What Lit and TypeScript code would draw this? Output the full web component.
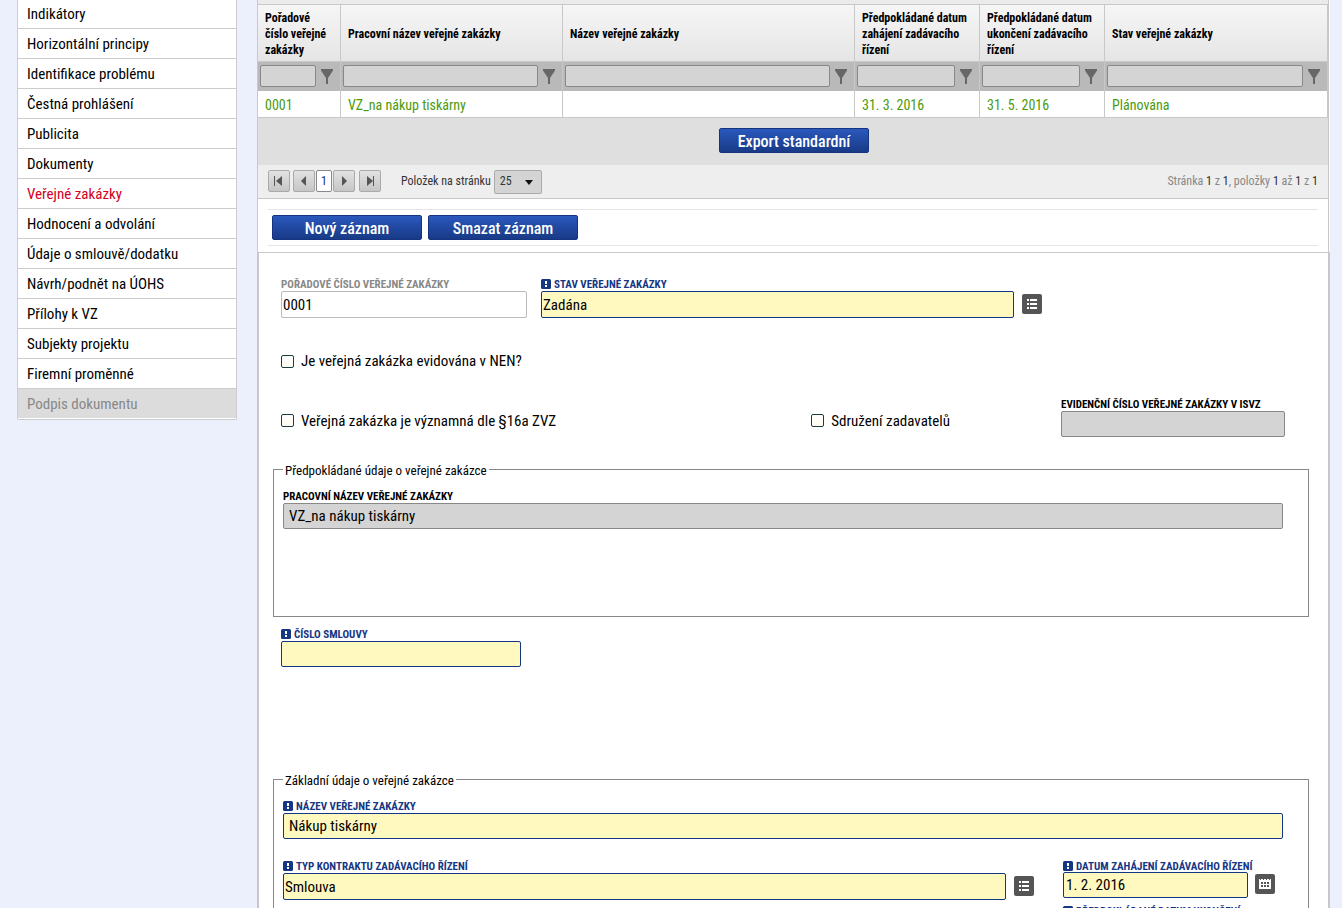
import { LitElement, html, css, svg, nothing } from "lit";
import { customElement } from "lit/decorators.js";
import { classMap } from "lit/directives/class-map.js";

interface Column {
  title: string;
  value: string;
  width: number;
}

const MENU = [
  "Indikátory",
  "Horizontální principy",
  "Identifikace problému",
  "Čestná prohlášení",
  "Publicita",
  "Dokumenty",
  "Veřejné zakázky",
  "Hodnocení a odvolání",
  "Údaje o smlouvě/dodatku",
  "Návrh/podnět na ÚOHS",
  "Přílohy k VZ",
  "Subjekty projektu",
  "Firemní proměnné",
  "Podpis dokumentu",
];

const COLUMNS: Column[] = [
  { title: "Pořadové číslo veřejné zakázky", value: "0001", width: 83 },
  { title: "Pracovní název veřejné zakázky", value: "VZ_na nákup tiskárny", width: 222 },
  { title: "Název veřejné zakázky", value: "", width: 292 },
  { title: "Předpokládané datum zahájení zadávacího řízení", value: "31. 3. 2016", width: 125 },
  { title: "Předpokládané datum ukončení zadávacího řízení", value: "31. 5. 2016", width: 125 },
  { title: "Stav veřejné zakázky", value: "Plánována", width: 223 },
];

const TOTAL = COLUMNS.reduce((sum, c) => sum + c.width, 0);

const funnel = html`<svg width="12" height="15" viewBox="0 0 12 15" aria-hidden="true">
  <path d="M0 0h12v1.5L7 9v6H5V9L0 1.5z" fill="#666" />
</svg>`;

const required = html`<svg class="mark" width="10" height="10" viewBox="0 0 10 10" aria-hidden="true">
  <rect width="10" height="10" rx="1.5" fill="#153683" />
  <path d="M4 2h2v3H4zM4 6h2v2H4z" fill="#fff" />
</svg>`;

const listIcon = html`<svg width="20" height="20" viewBox="0 0 20 20" aria-hidden="true">
  <path d="M5 5h2v2H5zM8 5h7v2H8zM5 9h2v2H5zM8 9h7v2H8zM5 13h2v2H5zM8 13h7v2H8z" fill="#fff" />
</svg>`;

const calendarIcon = html`<svg width="20" height="20" viewBox="0 0 20 20" aria-hidden="true">
  <path d="M4 5h1V4h1v1h2V4h1v1h2V4h1v1h2V4h1v1h1v10H4z" fill="#fff" />
  <path
    d="M5 4h1v2H5zM8 4h1v2H8zM11 4h1v2h-1zM14 4h1v2h-1zM6 8h2v2H6zM9 8h2v2H9zM12 8h2v2h-2zM6 11h2v2H6zM9 11h2v2H9zM12 11h2v2h-2z"
    fill="#555"
  />
</svg>`;

const arrow = (kind: "first" | "prev" | "next" | "last") => {
  const shapes = {
    first: svg`<path d="M6 6h1v10H6z" /><path d="M14 6v10L8 11z" />`,
    prev: svg`<path d="M13 6v10L8 11z" />`,
    next: svg`<path d="M9 6v10l5-5z" />`,
    last: svg`<path d="M8 6v10l6-5z" /><path d="M14 6h1v10h-1z" />`,
  };
  return html`<svg width="20" height="20" viewBox="1 1 20 20" fill="#555" aria-hidden="true">${shapes[kind]}</svg>`;
};

@customElement("app-root")
export class AppRoot extends LitElement {
  static styles = css`
    :host {
      display: flex;
      align-items: flex-start;
      gap: 20px;
      box-sizing: border-box;
      height: 100vh;
      overflow: hidden;
      padding: 0 12px 0 17px;
      background: #ecf0fd;
      color: #000;
      font-family: "Roboto Condensed", "Liberation Sans Narrow", Roboto, sans-serif;
      font-size: 15px;
    }
    * {
      box-sizing: border-box;
    }
    input,
    button,
    select {
      font-family: inherit;
      margin: 0;
    }
    .menu {
      flex: 0 0 220px;
      border: 1px solid #ccc;
      border-top: 0;
      border-radius: 0 0 2px 2px;
      background: #fff;
      padding-bottom: 1px;
    }
    .menu a {
      display: block;
      height: 30px;
      padding-left: 9px;
      border-bottom: 1px solid #ccc;
      line-height: 31px;
      color: #000;
      text-decoration: none;
    }
    .menu a:first-child {
      height: 29px;
      line-height: 29px;
    }
    .menu a.active {
      color: #d3001b;
    }
    .menu a.disabled {
      height: 29px;
      border-bottom: 0;
      background: #dcdcdc;
      color: #888;
    }
    main {
      flex: 1;
      min-width: 0;
      background: #fff;
    }
    .grid {
      margin-right: 1px;
      padding-top: 4px;
      border: solid #c8c8c8;
      border-width: 0 1px 1px;
      background: #ebebeb;
    }
    table {
      width: 100%;
      table-layout: fixed;
      border-collapse: separate;
      border-spacing: 0;
      border-top: 1px solid #c8c8c8;
    }
    th,
    td {
      border: solid #c8c8c8;
      border-width: 0 1px 1px 0;
      text-align: left;
    }
    .titles th {
      height: 57px;
      padding: 2px 6px 0 7px;
      background: linear-gradient(#f6f6f6, #e5e5e5);
      font-size: 12px;
      font-weight: 700;
      line-height: 16px;
    }
    .filters td {
      height: 29px;
      padding: 0 7px 1px 2px;
      border-bottom: 0;
      background: #b9b9b9;
    }
    .filter {
      display: flex;
      align-items: center;
      gap: 5px;
    }
    .filter input {
      flex: 1;
      min-width: 0;
      height: 22px;
      border: 1px solid #888;
      border-radius: 2px;
      background: #d4d4d4;
    }
    .icon {
      display: flex;
      padding: 0;
      border: 0;
      background: none;
    }
    .values td {
      height: 27px;
      padding: 2px 7px 0;
      background: #fff;
      color: #4c9a0c;
      font-size: 14px;
      line-height: 24px;
      white-space: nowrap;
    }
    .export {
      display: flex;
      justify-content: center;
      padding: 10px 0 12px 2px;
      background: #dfdfdf;
    }
    .primary {
      width: 150px;
      height: 25px;
      padding: 2px 0 0;
      border: 1px solid #15347f;
      border-radius: 2px;
      background: linear-gradient(#2b58bd, #183a86);
      color: #fff;
      font-size: 16px;
      font-weight: 500;
      line-height: 21px;
    }
    .pager {
      display: flex;
      align-items: flex-start;
      height: 33px;
      padding: 5px 10px 0;
      background: #eee;
      color: #333;
      font-size: 12px;
      line-height: 22px;
    }
    .pager button {
      display: flex;
      align-items: center;
      justify-content: center;
      width: 22px;
      height: 22px;
      padding: 0;
      border: 1px solid #aaa;
      border-radius: 2px;
      background: linear-gradient(#e2e2e2, #c6c6c6);
    }
    .pager button.page {
      width: 16px;
      border-color: #888;
      background: #fff;
      color: #153683;
      font-size: 12px;
    }
    .steps {
      display: flex;
      gap: 1px;
      margin: 0 4px 0 3px;
    }
    .per-page {
      display: flex;
      align-items: flex-start;
      gap: 3px;
      margin-left: 20px;
    }
    .select {
      display: grid;
      align-items: center;
    }
    .select select,
    .select svg {
      grid-area: 1 / 1;
    }
    .select svg {
      justify-self: end;
      margin-right: 9px;
      pointer-events: none;
    }
    .select select {
      appearance: none;
      width: 48px;
      height: 24px;
      padding: 0 5px 2px;
      border: 1px solid #aaa;
      border-radius: 2px;
      background: #d4d4d4;
      color: #333;
      font-size: 12px;
    }
    .summary {
      margin-left: auto;
      color: #888;
    }
    .summary b {
      color: #333;
      font-weight: 400;
    }
    .records {
      margin-right: 1px;
      padding: 10px 10px 6px;
      border: solid #c8c8c8;
      border-width: 0 1px;
    }
    .records div {
      display: flex;
      gap: 6px;
      padding: 5px 4px;
      border: solid #e5e5e5;
      border-width: 1px 0;
    }
    form {
      padding: 24px 19px 0 14px;
      border: solid #c8c8cc;
      border-width: 1px 2px 0;
    }
    .row {
      display: flex;
      align-items: flex-start;
    }
    .indent {
      padding-left: 8px;
    }
    .order {
      width: 246px;
      margin-right: 14px;
    }
    .state {
      width: 501px;
    }
    .nen {
      margin-top: 33px;
    }
    .flags {
      margin-top: 26px;
      padding-right: 24px;
    }
    .flags .check {
      margin-top: 14px;
    }
    .flags .joint {
      margin-left: auto;
      margin-right: 111px;
    }
    .registry {
      width: 224px;
    }
    .contract {
      width: 240px;
      margin: 10px 0 104px 8px;
    }
    .field {
      display: flex;
      flex-direction: column;
    }
    .field label {
      display: flex;
      align-items: center;
      gap: 3px;
      height: 14px;
      font-size: 11px;
      font-weight: 700;
      line-height: 14px;
      text-transform: uppercase;
      white-space: nowrap;
    }
    .field label span {
      padding-top: 2px;
    }
    .box {
      display: flex;
      align-items: flex-start;
      gap: 8px;
    }
    .box input {
      flex: 1;
      min-width: 0;
      height: 26px;
      padding: 0 2px;
      border: 1px solid #bbb;
      border-radius: 2px;
      background: #fff;
      color: #000;
      font-size: 15px;
    }
    .pick input,
    .order input {
      height: 27px;
      padding: 0 1px;
    }
    .muted label {
      color: #888;
    }
    .must label {
      color: #153683;
    }
    .must input {
      border-color: #153683;
      background: #fff8bf;
    }
    .locked input {
      border-color: #888;
      background: #d4d4d4;
    }
    .wide input {
      padding: 0 5px;
    }
    .tool {
      display: flex;
      margin-top: 3px;
      padding: 0;
      border: 0;
      border-radius: 2px;
      background: #555;
    }
    .check {
      display: flex;
      align-items: center;
      gap: 7px;
      height: 19px;
      line-height: 20px;
      white-space: nowrap;
    }
    .check input {
      appearance: none;
      width: 13px;
      height: 13px;
      border: 1px solid #1b3c40;
      border-radius: 2px;
      background: linear-gradient(#fff, #fffbee);
    }
    fieldset {
      min-width: 0;
      margin: 0;
      padding: 11px 25px 0 9px;
      border: 1px solid #888;
    }
    legend {
      padding: 2px 2px 0;
      font-size: 13px;
      line-height: 15px;
    }
    .expected {
      margin-top: 24px;
      padding-bottom: 87px;
    }
    .pair {
      justify-content: space-between;
      margin-top: 20px;
      padding-right: 8px;
    }
    .kind {
      flex: 0 1 751px;
    }
    .dates {
      display: flex;
      flex-direction: column;
      gap: 6px;
      width: 212px;
    }
    .dates label {
      height: 13px;
    }
    .dates .box {
      gap: 7px;
    }
    .dates .tool {
      margin-top: 2px;
    }
    .nen .check {
      height: 20px;
    }
  `;

  private field(id: string, label: string, value: string, kind: string, tool: unknown = nothing) {
    const must = kind.includes("must");
    return html`<div class="field ${kind}">
      <label for=${id}>${must ? required : nothing}<span>${label}</span></label>
      <div class="box">
        <input id=${id} type="text" .value=${value} ?readonly=${kind.includes("locked")} />
        ${tool === nothing
          ? nothing
          : html`<button class="tool" type="button" aria-label="Vybrat">${tool}</button>`}
      </div>
    </div>`;
  }

  render() {
    return html`
      <nav class="menu">
        ${MENU.map(
          (item, i) => html`<a
            href="#"
            class=${classMap({ active: i === 6, disabled: i === MENU.length - 1 })}
            >${item}</a
          >`
        )}
      </nav>
      <main>
        <section class="grid">
          <table>
            <colgroup>
              ${COLUMNS.map((c) => html`<col style="width:${(c.width / TOTAL) * 100}%" />`)}
            </colgroup>
            <thead>
              <tr class="titles">
                ${COLUMNS.map((c) => html`<th scope="col">${c.title}</th>`)}
              </tr>
              <tr class="filters">
                ${COLUMNS.map(
                  (c) => html`<td>
                    <div class="filter">
                      <input type="text" aria-label=${c.title} />
                      <button class="icon" type="button" aria-label="Filtr">${funnel}</button>
                    </div>
                  </td>`
                )}
              </tr>
            </thead>
            <tbody>
              <tr class="values">
                ${COLUMNS.map((c) => html`<td>${c.value}</td>`)}
              </tr>
            </tbody>
          </table>
          <div class="export"><button class="primary" type="button">Export standardní</button></div>
          <div class="pager">
            <button type="button" aria-label="První">${arrow("first")}</button>
            <div class="steps">
              <button type="button" aria-label="Předchozí">${arrow("prev")}</button>
              <button class="page" type="button">1</button>
              <button type="button" aria-label="Další">${arrow("next")}</button>
            </div>
            <button type="button" aria-label="Poslední">${arrow("last")}</button>
            <div class="per-page">
              <label for="size">Položek na stránku</label>
              <span class="select">
                <select id="size">
                  <option>25</option>
                </select>
                <svg width="8" height="5" viewBox="0 0 8 5" aria-hidden="true">
                  <path d="M0 0h8L4 5z" fill="#111" />
                </svg>
              </span>
            </div>
            <span class="summary"
              >Stránka <b>1</b> z <b>1</b>, položky <b>1</b> až <b>1</b> z <b>1</b></span
            >
          </div>
        </section>
        <section class="records">
          <div>
            <button class="primary" type="button">Nový záznam</button>
            <button class="primary" type="button">Smazat záznam</button>
          </div>
        </section>
        <form>
          <div class="row indent">
            ${this.field("order", "Pořadové číslo veřejné zakázky", "0001", "muted order")}
            ${this.field("state", "Stav veřejné zakázky", "Zadána", "must pick state", listIcon)}
          </div>
          <div class="row indent nen">
            <label class="check"><input type="checkbox" />Je veřejná zakázka evidována v NEN?</label>
          </div>
          <div class="row indent flags">
            <label class="check"><input type="checkbox" />Veřejná zakázka je významná dle §16a ZVZ</label>
            <label class="check joint"><input type="checkbox" />Sdružení zadavatelů</label>
            ${this.field("registry", "Evidenční číslo veřejné zakázky v ISVZ", "", "locked registry")}
          </div>
          <fieldset class="expected">
            <legend>Předpokládané údaje o veřejné zakázce</legend>
            ${this.field("working", "Pracovní název veřejné zakázky", "VZ_na nákup tiskárny", "locked wide")}
          </fieldset>
          ${this.field("contract", "Číslo smlouvy", "", "must contract")}
          <fieldset>
            <legend>Základní údaje o veřejné zakázce</legend>
            ${this.field("name", "Název veřejné zakázky", "Nákup tiskárny", "must wide")}
            <div class="row pair">
              ${this.field("kind", "Typ kontraktu zadávacího řízení", "Smlouva", "must pick kind", listIcon)}
              <div class="dates">
                ${this.field("start", "Datum zahájení zadávacího řízení", "1. 2. 2016", "must", calendarIcon)}
                ${this.field("end", "Předpokládané datum ukončení", "", "must", calendarIcon)}
              </div>
            </div>
          </fieldset>
        </form>
      </main>
    `;
  }
}
